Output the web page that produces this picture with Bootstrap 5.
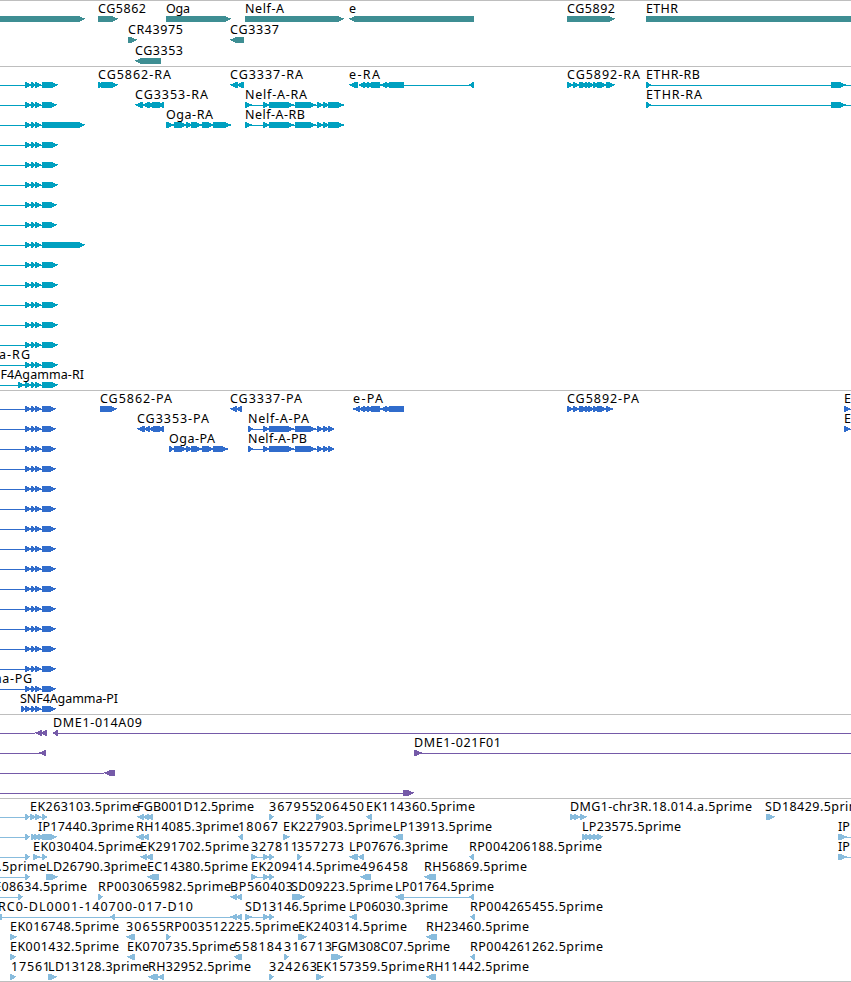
<!DOCTYPE html>
<html lang="en">
<head>
<meta charset="utf-8">
<meta name="viewport" content="width=device-width, initial-scale=1">
<title>Genome browser tracks</title>
<link href="https://cdn.jsdelivr.net/npm/bootstrap@5.3.0/dist/css/bootstrap.min.css" rel="stylesheet">
<style>
  .track { border-top: 1px solid #bebebe; }
  .track svg { font: 12.5px "Noto Sans", "DejaVu Sans", sans-serif; fill: #000; }
  .track polygon, .track rect { shape-rendering: crispEdges; }
  .genes { height: 66px; color: #3e8e93; }
  .transcripts, .proteins { height: 324px; }
  .transcripts { color: #00a0c0; }
  .proteins { color: #306ccc; }
  .cdna { height: 84px; color: #755aa8; }
  .reads { height: 184px; color: #88bcdd; border-bottom: 1px solid #bebebe; }
</style>
</head>
<body class="bg-white overflow-hidden">
<main class="d-flex flex-column w-100">
  <section class="track genes overflow-hidden" data-pitch="21"></section>
  <section class="track transcripts overflow-hidden" data-pitch="20"></section>
  <section class="track proteins overflow-hidden" data-pitch="20"></section>
  <section class="track cdna overflow-hidden" data-pitch="20"></section>
  <section class="track reads overflow-hidden" data-pitch="20"></section>
</main>
<script src="https://cdn.jsdelivr.net/npm/bootstrap@5.3.0/dist/js/bootstrap.bundle.min.js"></script>
<script>
// Each row is [features, labels]. Features: ">a:b" forward, "<a:b" reverse, "-a:b" connecting line.
// Labels: "text@start:end", separated by spaces.
const nelf = '-245:344 >245:252 >263:269 >269:294 >295:316 >317:324 >323:329 >328:344';
const nelfP = '-248:334 >248:253 >263:269 >269:294 >295:316 >317:324 >323:329 >328:334';
const ethr = '-646:851 >646:651 >831:846';
const snf = (end, extra = '') => `-0:42 >25:31 >31:36 >35:41 >42:${end} ${extra} `;
const spliced = '-251:274 >251:257 >263:269 >269:274';
const cg5892 = '-567:613 >567:574 >573:580 >579:585 >581:587 >585:592 >588:594 >593:600 >597:606 >600:607 ';

const transcripts = [
  [snf(58) + '>98:102 >101:118 <230:238 <236:244 <349:358 <359:365 <362:369 <366:380 <380:387 <384:404 -359:474 <469:474 ' + cg5892 + '>606:615 ' + ethr,
   'CG5862-RA@98:171 CG3337-RA@230:303 e-RA@349:380 CG5892-RA@567:640 ETHR-RB@646:700'],
  [snf(57) + '<135:143 <142:150 <147:160 <158:164 ' + nelf + ' ' + ethr, 'CG3353-RA@135:208 Nelf-A-RA@245:307 ETHR-RA@646:702'],
  [snf(85) + '-166:231 >166:174 >174:187 >186:193 >191:202 >202:210 >205:214 >213:231 ' + nelf, 'Oga-RA@166:213 Nelf-A-RB@245:305']
];
[58, 58, 58, 57, 57, 85, 58, 58, 58, 58, 58].forEach(e => transcripts.push([snf(e), '']));
transcripts.push([snf(58), 'a-RG@-1:30'], [snf(58, '>18:25'), 'SNF4Agamma-RI@-16:84']);

const proteins = [
  [snf(56) + '>100:117 <230:237 <236:242 -353:404 <353:360 <359:365 <362:369 <366:380 <380:387 <384:404 ' + cg5892 + '>606:613 -844:851 >844:850',
   'CG5862-PA@100:172 CG3337-PA@230:302 e-PA@353:383 CG5892-PA@567:639 ETHR-PB@844:898'],
  [snf(56) + '<137:145 <143:150 <148:160 <158:164 -844:851 >844:850 ' + nelfP, 'CG3353-PA@137:209 Nelf-A-PA@248:309 ETHR-PA@844:899'],
  [snf(56) + '-169:228 >169:174 >174:187 >186:193 >191:202 >202:210 >205:214 >213:228 ' + nelfP, 'Oga-PA@169:215 Nelf-A-PB@248:307']
];
for (let i = 0; i < 11; i++) proteins.push([snf(56), '']);
proteins.push([snf(56), 'ma-PG@-10:32'], ['-21:42 >21:26 >25:31 >31:36 >35:41 >42:56', 'SNF4Agamma-PI@20:118']);

const data = {
  genes: [
    ['>-20:85 >98:118 >166:231 >245:344 <349:474 >567:615 >646:900', 'CG5862@98:146 Oga@166:190 Nelf-A@245:284 e@349:356 CG5892@567:615 ETHR@646:678'],
    ['>128:137 <230:244', 'CR43975@128:183 CG3337@230:279'],
    ['<135:161', 'CG3353@135:183']
  ],
  transcripts, proteins,
  cdna: [
    ['-0:35 <35:42 <40:47 -53:851 <53:58', 'DME1-014A09@53:142'],
    ['-0:46 <39:46 -414:851 >414:422', 'DME1-021F01@414:501'],
    ['-0:104 <104:115', ''],
    ['-0:403 >403:414', '']
  ],
  reads: [
    ['-0:25 >25:30 >30:36 >35:41 >42:47 -35:47 <137:144 <142:149 <147:153 >269:274 >316:324 <366:372 >570:577 >574:581 >580:587 >766:775',
     'EK263103.5prime@30:139 FGB001D12.5prime@137:254 367955@269:317 206450@316:364 EK114360.5prime@366:475 DMG1-chr3R.18.014.a.5prime@570:752 SD18429.5prime@765:868'],
    ['-0:25 >25:30 >31:36 >34:40 >38:44 >42:57 <136:144 <142:149 <238:243 >283:290 <393:403 >582:588 >585:592 >589:596 >593:600 >597:603 -838:851 >838:847',
     'IP17440.3prime@38:134 RH14085.3prime@136:239 18067@238:278 EK227903.5prime@283:392 LP13913.5prime@393:492 LP23575.5prime@582:681 IP15850.5prime@838:932'],
    ['-0:25 >25:30 >33:40 >42:47 -33:47 <140:147 <145:153 ' + spliced + ' >297:302 <349:358 <358:364 <469:474 -838:851 >838:847',
     'EK030404.5prime@33:142 EK291702.5prime@140:249 327811@251:298 357273@297:344 LP07676.3prime@349:448 RP004206188.5prime@469:602 IP15850.3prime@838:932'],
    ['-0:25 >25:30 >46:58 <147:159 ' + spliced + ' <360:367 <363:369 <365:371 <424:436',
     'EK27281.5prime@-55:46 LD26790.3prime@46:147 EC14380.5prime@147:248 EK209414.5prime@251:360 496458@360:408 RH56869.5prime@424:527'],
    ['-0:18 >18:23 >98:103 <230:237 <235:242 >292:296 >294:305 <395:404 -404:474 <469:474',
     'RE08634.5prime@-14:87 RP003065982.5prime@98:231 BP560403@230:293 SD09223.5prime@291:393 LP01764.5prime@395:494'],
    ['-0:242 <-4:2 <110:115 <230:237 <235:242 -245:274 >245:252 >263:269 >269:274 <349:357 <470:475',
     'RC0-DL0001-140700-017-D10@-2:193 SD13146.5prime@245:346 LP06030.3prime@349:448 RP004265455.5prime@470:603'],
    ['>10:17 <126:135 >166:171 >298:307 <426:437',
     'EK016748.5prime@10:119 30655@126:166 RP003512225.5prime@166:299 EK240314.5prime@298:407 RH23460.5prime@426:529'],
    ['>10:16 <127:135 <234:240 <237:242 >284:289 >331:343 <470:475',
     'EK001432.5prime@10:119 EK070735.5prime@127:236 558184@234:282 316713@284:332 FGM308C07.5prime@331:450 RP004261262.5prime@470:603'],
    ['>10:16 >48:57 <148:158 <157:164 >269:274 >316:324 <426:436',
     '17561@11:50 LD13128.3prime@48:149 RH32952.5prime@148:251 324263@269:317 EK157359.5prime@316:425 RH11442.5prime@426:529']
  ]
};

function glyph(token, y) {
  const [a, b] = token.slice(1).split(':').map(Number);
  if (token[0] === '-') return `<rect x="${a}" y="${y + 3}" width="${b - a}" height="1"/>`;
  // arrow heads taper over at most 7px
  const t = Math.min(7, b - a);
  return token[0] === '>'
    ? `<polygon points="${a},${y} ${b - t + 1},${y} ${b + .4},${y + 2.8} ${b - t + 1},${y + 6} ${a},${y + 6}"/>`
    : `<polygon points="${b},${y} ${a + t - 1},${y} ${a - .4},${y + 2.8} ${a + t - 1},${y + 6} ${b},${y + 6}"/>`;
}

for (const [name, rows] of Object.entries(data)) {
  const track = document.querySelector('.' + name);
  const pitch = +track.dataset.pitch;
  let shapes = '', labels = '';
  rows.forEach(([features, names], i) => {
    const y = 16 + i * pitch;
    features.split(' ').filter(Boolean).forEach(f => shapes += glyph(f, y));
    names.split(' ').filter(Boolean).forEach(n => {
      const [text, span] = n.split('@');
      const [a, b] = span.split(':').map(Number);
      labels += `<text x="${a}" y="${y - 3}" textLength="${b - a}">${text}</text>`;
    });
  });
  // shift by the border so that row offsets count from the track's top edge
  track.innerHTML = `<svg class="d-block w-100 h-100" viewBox="0 1 851 ${track.clientHeight}" preserveAspectRatio="xMinYMin"><g fill="currentColor">${shapes}</g><g>${labels}</g></svg>`;
}
</script>
</body>
</html>
